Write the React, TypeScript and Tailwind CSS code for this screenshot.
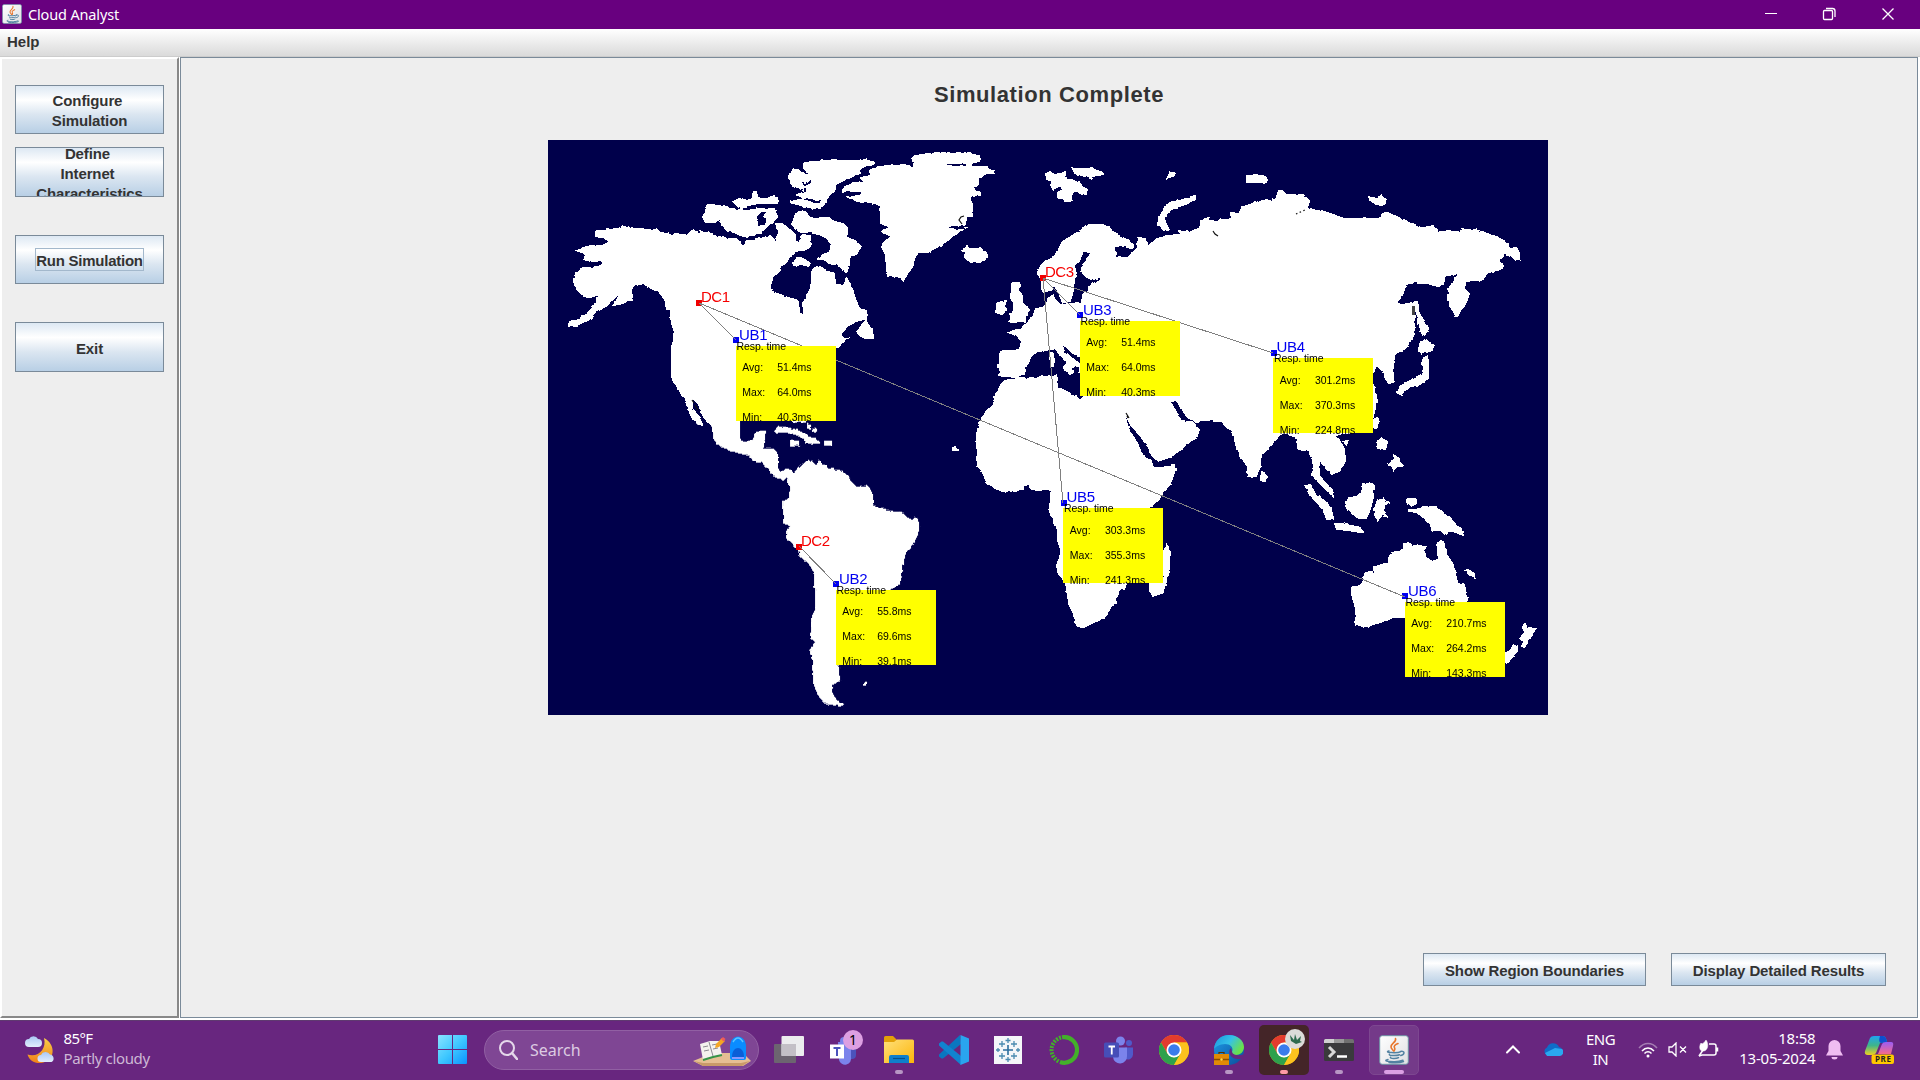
import React from "react";

const SEA = "#00004b";

/* Coastlines, each group traced on its own 3x grid */
const northAmerica = [
  "165,302 178,300 205,298 240,292 245,286 265,288 270,294 350,297 362,306 385,310 398,316 402,308 440,314 460,298 475,310 478,300 488,302 492,310 505,304 520,315 545,320 570,325 590,325 600,335 612,345 618,330 640,330 660,325 690,315 700,320 708,335 712,308 705,280 725,278 740,290 755,300 768,312 770,340 782,328 785,312 813,315 815,340 805,357 790,365 770,368 750,380 740,400 728,408 720,425 705,440 692,455 695,480 715,490 735,498 760,505 775,510 780,545 790,550 790,520 795,500 808,480 812,460 815,415 830,408 850,415 870,425 885,430 888,462 912,462 918,440 930,455 940,480 950,510 960,535 980,540 982,575 1000,605 1002,628 975,628 945,610 960,590 975,570 950,575 920,595 905,612 912,625 930,622 910,640 893,655 880,650 860,870 600,870 600,910 518,910 515,890 490,865 480,840 470,820 455,805 460,835 475,855 490,885 475,885 455,865 440,835 435,805 420,790 410,770 395,755 392,700 392,655 400,625 400,600 392,580 390,540 378,540 375,515 365,500 350,485 330,475 310,463 278,470 280,495 275,512 240,525 215,528 225,515 235,497 215,515 200,530 165,550 150,570 110,588 80,590 85,578 120,565 145,545 160,525 175,498 145,505 130,500 110,480 98,455 105,428 130,412 175,408 190,398 145,395 130,390 135,375 105,362 150,345 185,345 205,335 190,325 165,320",
  "765,250 785,240 800,248 810,262 870,262 885,275 912,280 925,295 925,320 945,330 965,350 950,375 930,380 930,405 920,432 905,415 885,405 865,400 855,392 828,388 845,375 870,360 872,340 860,325 835,315 815,310 790,308 765,300 755,280 760,265",
  "755,400 765,390 775,380 800,388 812,400 808,410 780,405 765,412",
  "785,100 800,95 880,88 920,90 975,88 1005,95 1003,105 975,110 960,120 965,130 940,140 920,150 905,155 890,165 885,185 860,205 855,225 840,238 810,235 790,230 750,220 750,210 790,207 765,195 790,185 775,175 752,165 745,135 760,115 775,118 795,130 805,135 790,115",
  "500,222 550,225 580,235 620,240 650,235 705,235 715,262 695,280 680,295 665,310 640,318 610,322 580,308 560,305 545,290 540,268 525,280 500,280 485,262 495,245",
  "575,215 595,205 635,208 635,190 650,183 655,205 680,205 700,195 715,200 715,222 690,222 655,222 625,228 605,238 590,230",
];
const northAmericaWater = [
  "650,262 665,245 678,245 670,260 680,270 675,285 655,287",
  "782,150 795,162 813,150 813,160 795,168 790,185 800,180",
  "790,207 845,210 838,216 800,214",
];
const northEurope = [
  "-115,178 -80,155 -55,155 -60,142 -30,135 -35,120 -10,110 20,105 75,103 100,108 95,85 105,75 150,70 160,66 220,68 250,66 300,76 303,90 280,98 275,108 320,108 330,118 346,122 345,132 320,132 297,145 297,165 283,178 303,185 303,197 275,200 280,235 275,260 262,265 255,290 270,290 240,305 215,325 180,350 145,368 115,370 105,385 100,410 82,435 70,458 60,443 22,440 18,415 15,375 3,350 10,335 30,320 10,310 5,300 25,293 0,280 0,250 -5,225 -35,218 -70,215 -105,200 -60,195 -55,185 -115,185",
  "243,362 260,343 268,355 300,352 325,370 325,385 300,400 270,398 250,382 255,370",
  "495,130 510,123 525,133 540,125 558,125 560,145 580,150 600,158 622,180 622,195 600,192 583,182 575,200 575,217 555,217 550,208 530,205 530,190 548,180 540,170 520,180 510,165 515,155 498,152",
  "573,112 610,115 640,115 673,127 670,137 640,140 630,147 605,138 582,130",
  "860,135 870,125 888,127 885,138 860,147",
  "950,195 952,210 925,222 885,235 860,250 855,265 862,285 870,300 850,302 830,285 835,265 850,235 870,215 905,208 930,198",
  "470,430 480,405 500,390 520,380 540,345 560,325 600,300 625,283 670,282 690,292 715,315 745,328 762,345 755,358 735,352 705,352 708,380 745,380 770,355 772,320 800,325 805,345 830,325 860,315 900,312 890,300 930,305 960,290 960,270 975,263 990,270 1030,275 1030,820 610,802 600,780 598,708 575,715 582,728 570,735 555,725 548,712 560,700 545,685 535,672 525,658 500,662 470,668 455,680 445,700 438,715 435,735 410,745 355,738 357,715 350,705 358,700 357,662 400,660 415,660 423,635 415,625 400,615 380,608 405,598 425,595 435,580 455,560 465,535 490,530 500,515 500,500 485,485 482,450",
  "393,460 420,455 423,470 415,480 425,495 430,520 450,540 440,555 438,575 400,577 380,577 390,568 388,550 400,540 400,525 390,505 392,480",
  "350,517 378,510 380,545 365,555 348,548",
  "507,668 520,665 525,690 522,712 510,712",
];
const northEuropeWater = [
  "612,368 630,370 620,390 605,405 603,425 615,440 635,452 660,444 660,450 640,458 625,470 625,485 608,488 605,515 545,522 572,515 580,490 585,450 590,430 588,405 600,395 605,380",
  "483,485 510,485 522,470 530,480 545,515 555,522 540,522 525,505 520,490 505,500 495,520",
  "548,648 560,655 575,670 600,682 600,700 580,685 555,665",
  "200,102 262,102 262,108 200,106",
  "200,290 255,288 255,298 215,295",
];
const siberia = [
  "0,270 25,262 30,275 45,285 60,265 70,268 90,265 90,250 115,250 125,230 180,212 200,207 215,212 232,200 235,180 250,182 258,192 310,192 330,212 325,235 380,245 430,263 540,265 545,250 560,245 600,262 640,280 665,292 700,285 715,305 750,300 780,305 785,297 830,298 890,318 925,338 930,355 945,350 962,365 960,390 945,392 935,380 915,372 898,390 915,412 905,420 862,430 850,452 800,455 795,475 810,490 800,520 780,550 768,563 755,540 740,510 745,475 760,450 775,430 760,437 735,437 733,465 710,470 680,462 640,460 618,465 610,495 593,517 605,523 640,515 645,560 645,612 620,655 590,675 582,695 580,725 583,755 570,762 555,750 550,725 530,710 520,730 520,760 532,800 525,850 515,870 80,870 0,860",
  "640,515 655,512 657,545 670,565 688,595 675,618 663,612 655,580 650,560",
  "660,630 675,628 690,640 708,645 690,665 665,672 653,665",
  "665,680 685,675 688,745 660,765 620,775 605,797 590,790 600,765 640,745 665,730",
  "138,140 160,132 190,135 207,150 195,162 175,158 138,160",
  "500,200 535,200 548,195 562,208 555,225 535,228 510,215",
];
const southAmerica = [
  "20,-10 40,30 40,55 50,72 85,92 115,100 150,108 160,125 180,128 205,145 210,160 250,182 262,172 265,195 270,205 265,235 248,245 250,310 272,322 258,330 258,355 290,385 300,410 325,430 340,455 345,520 345,570 335,590 330,655 345,665 328,690 335,720 340,790 350,820 370,850 420,860 432,853 410,840 395,815 400,795 420,780 415,740 440,600 570,510 600,492 605,470 612,430 615,405 640,375 655,340 658,310 650,290 630,298 605,278 570,272 520,255 518,215 500,195 470,200 450,180 445,165 420,150 385,145 355,120 350,135 325,120 300,135 280,160 275,150 260,145 240,158 235,140 235,100 220,85 190,85 198,32 165,35 158,60 140,65 122,62 120,30 120,-10",
  "0,-10 5,15 -12,12",
  "220,35 235,18 280,25 315,40 325,50 350,55 363,72 315,72 312,58 300,50 270,40 235,38",
  "270,62 298,62 298,76 270,76",
  "372,62 395,62 395,76 372,76",
  "322,12 332,15 332,30 322,26",
  "335,25 350,28 350,38 338,36",
  "275,0 318,0 316,10 300,6 278,10",
  "483,798 492,788 502,790 502,798",
];
const africa = [
  "190,60 230,55 300,50 330,45 352,45 355,80 385,95 420,118 432,108 440,85 1290,85 1290,215 1060,215 1020,225 985,270 965,285 962,320 950,350 925,350 920,320 900,290 885,255 880,225 865,205 840,187 800,182 770,190 740,172 720,145 710,125 693,125 705,145 725,180 760,185 780,210 770,235 740,255 720,275 690,293 655,305 635,290 625,265 600,230 570,195 557,170 568,205 600,260 605,280 635,300 640,318 690,318 705,310 707,330 695,370 670,400 655,425 630,443 560,672 555,690 540,690 530,725 510,750 495,775 460,790 430,805 410,800 400,765 385,735 380,700 375,670 365,655 350,640 350,625 357,590 362,570 350,540 350,510 340,490 325,450 330,420 332,393 315,390 300,395 270,388 265,375 255,378 250,390 225,393 190,397 160,385 140,370 122,330 107,318 107,220 125,170 160,130 165,100",
  "683,545 688,570 695,575 690,600 688,640 670,700 640,710 628,695 628,670 670,650 670,570",
  "35,272 35,265 48,257 56,264 56,272",
  "965,330 985,352 975,368 960,362",
];
const oceania = [
  "110,215 165,232 175,270 205,275 215,300 215,345 230,365 250,385 270,405 283,415 275,385 255,365 240,345 240,305 255,325 275,345 300,335 318,305 315,265 300,240 290,225 330,222 340,210",
  "305,245 328,238 320,258",
  "398,175 418,175 410,208 400,205",
  "408,245 425,232 445,245 437,270 415,268",
  "440,315 460,300 460,283 478,290 480,308 497,320 475,320 460,335 455,320",
  "192,375 215,372 225,395 255,420 275,445 283,480 262,480 240,440 210,410",
  "283,490 300,488 360,500 375,520 335,515 285,508",
  "315,430 325,412 350,408 365,390 370,370 385,365 405,375 403,395 395,440 380,478 350,475 325,450",
  "400,445 412,420 430,415 450,430 435,440 432,455 447,475 428,465 415,483 402,470",
  "495,425 500,415 530,415 533,430 515,440",
  "503,448 540,445 550,437 590,440 610,460 632,470 640,485 665,505 673,530 650,520 630,515 612,525 600,512 575,515 570,495 550,475 530,460 505,455",
  "333,680 365,672 375,635 390,632 398,640 400,620 430,610 442,610 445,590 460,575 490,570 490,550 505,547 520,555 565,558 550,575 570,600 590,600 592,545 612,542 620,580 640,610 655,670 675,672 685,725 680,760 500,772 460,775 420,790 370,803 345,798 345,745 335,715",
  "670,630 685,627 705,640 707,658 692,650",
  "848,790 858,790 862,805 890,805 870,835 855,865 842,860 850,845 833,835 850,820",
  "820,853 835,860 835,875 820,890 800,912 790,905 790,880 810,870",
];

function Land({ x, y, land, water = [] }: { x: number; y: number; land: string[]; water?: string[] }) {
  return (
    <g transform={`translate(${x} ${y}) scale(0.33333)`}>
      {land.map((p) => <polygon key={p} points={p} fill="#fff" />)}
      {water.map((p) => <polygon key={p} points={p} fill={SEA} />)}
    </g>
  );
}

const links = [
  [699, 303, 736, 340], [699, 303, 1405, 597], [799, 546, 836, 584],
  [1043, 278, 1080, 315], [1043, 278, 1273, 353], [1043, 278, 1063, 503],
];
const dataCenters = [
  { n: "DC1", x: 696, y: 300 }, { n: "DC2", x: 796, y: 544 }, { n: "DC3", x: 1040, y: 275 },
];
const userBases = [
  { n: "UB1", x: 736, y: 346, v: ["51.4ms", "64.0ms", "40.3ms"], d: 0 },
  { n: "UB2", x: 836, y: 590, v: ["55.8ms", "69.6ms", "39.1ms"], d: 0 },
  { n: "UB3", x: 1080, y: 321, v: ["51.4ms", "64.0ms", "40.3ms"], d: 0 },
  { n: "UB4", x: 1273, y: 358, v: ["301.2ms", "370.3ms", "224.8ms"], d: 1 },
  { n: "UB5", x: 1063, y: 508, v: ["303.3ms", "355.3ms", "241.3ms"], d: 1 },
  { n: "UB6", x: 1405, y: 602, v: ["210.7ms", "264.2ms", "143.3ms"], d: 0 },
];

function WorldMap() {
  return (
    <svg className="block h-[575px] w-[1000px] font-['Liberation_Sans',sans-serif]" viewBox="548 140 1000 575">
      <defs>
        <filter id="coast" x="0" y="0" width="100%" height="100%">
          <feTurbulence type="fractalNoise" baseFrequency="0.2" numOctaves="1" seed="4" result="n" />
          <feDisplacementMap in="SourceGraphic" in2="n" scale="3.5" xChannelSelector="R" yChannelSelector="G" />
        </filter>
      </defs>
      <rect x="548" y="140" width="1000" height="575" fill={SEA} />
      <g shapeRendering="crispEdges" filter="url(#coast)">
        <Land x={540} y={130} land={northAmerica} water={northAmericaWater} />
        <Land x={880} y={130} land={northEurope} water={northEuropeWater} />
        <Land x={1200} y={130} land={siberia} />
        <Land x={700} y={420} land={southAmerica} />
        <Land x={940} y={360} land={africa} />
        <Land x={1240} y={360} land={oceania} />
      </g>
      <g fill="none" stroke="#111" strokeWidth="1.2">
        <path d="M692 400l2 3M695 405l3 5M1213 231l2 3 3 2M1126 413l3 5M1127 416l1 2" />
        <path d="M1296 214l9-4" strokeDasharray="1.5 2.5" />
        <path d="M964 216l-3 1-2 3 3 4" />
        <path d="M1413.500 306v9" stroke="#444" strokeWidth="3" />
      </g>
      {dataCenters.map((d) => (
        <g key={d.n}>
          <rect x={d.x} y={d.y} width="6" height="6" fill="#f00000" />
          <text x={d.x + 5} y={d.y + 2} fill="#f60000" fontSize="15" textLength="29">{d.n}</text>
        </g>
      ))}
      {userBases.map((u) => (
        <g key={u.n}>
          <rect x={u.x - 3 + u.d} y={u.y - 9 + u.d} width="6" height="6" fill="#0000f0" />
        </g>
      ))}
      <g stroke="#808080" strokeWidth="1" shapeRendering="crispEdges">
        {links.map((l) => <line key={l.join()} x1={l[0]} y1={l[1]} x2={l[2]} y2={l[3]} />)}
      </g>
      {userBases.map((u) => (
        <g key={u.n}>
          <rect x={u.x} y={u.y} width="100" height="75" fill="#ff0" />
          <text x={u.x + 3 + u.d * 0.5} y={u.y - 6} fill="#0000f0" fontSize="15" textLength="28.5">{u.n}</text>
          <g fontSize="10.5" fill="#000">
            <text x={u.x + 0.5 + u.d * 0.5} y={u.y + 4} textLength="49.5">Resp. time</text>
            {["Avg:", "Max:", "Min:"].map((k, i) => (
              <g key={k}>
                <text x={u.x + 6.3 + u.d * 0.5} y={u.y + 25 * (i + 1) + u.d}>{k}</text>
                <text x={u.x + 41.2 + u.d * 0.7} y={u.y + 25 * (i + 1) + u.d}>{u.v[i]}</text>
              </g>
            ))}
          </g>
        </g>
      ))}
    </svg>
  );
}

function SwingButton({ className, children }: { className: string; children: React.ReactNode }) {
  return (
    <button
      className={`flex shrink-0 items-center justify-center overflow-hidden border border-[#7a8a99] bg-[linear-gradient(#dde8f3_0%,#ffffff_30%,#dbe6f1_60%,#b8cfe5_100%)] text-center text-[15px] leading-5 font-bold tracking-[-0.12px] text-[#333] ${className}`}
    >
      {children}
    </button>
  );
}

function JavaLogo({ size }: { size: number }) {
  return (
    <svg width={size} height={size} viewBox="0 0 30 30">
      <defs>
        <linearGradient id="jbg" x2="1" y2="1"><stop stopColor="#fff" /><stop offset="1" stopColor="#dfe0e2" /></linearGradient>
      </defs>
      <rect x=".7" y=".7" width="28.6" height="28.6" rx="2.5" fill="url(#jbg)" stroke="#6d93a5" strokeWidth="1" />
      <g fill="none" stroke="#e8762c" strokeWidth="1.6" strokeLinecap="round">
        <path d="M16.500 3.500c1.500 3.500-5 5-4.500 8.500.2 1.800 1.800 2.600 2.500 4" />
        <path d="M19 8.500c-3 1.200-4.500 2.700-3.500 4.300.8 1.200.5 2.200-.2 3" />
      </g>
      <g fill="none" stroke="#5382a1" strokeWidth="1.5" strokeLinecap="round">
        <path d="M10 16c-6 1.500 8 2.600 12 .6M10.500 19.400c-1.500 1.300 7 1.700 10 .3M11.500 22.400c-1 1.300 6 1.500 8 .2M9 24.400c-8 2 9 3.600 15 .9M21.500 16.500c5-1 4.200 3.200.3 4M10 27.500c6 .6 12 .2 14.500-1" />
      </g>
    </svg>
  );
}

function ChromeLogo() {
  return (
    <svg width="30" height="30" viewBox="0 0 30 30">
      <circle cx="15" cy="15" r="15" fill="#fbbc04" />
      <path d="M2 7.500A15 15 0 0 1 28 7.500H15L8.500 18.750Z" fill="#e33b2e" />
      <path d="M2 7.500L8.500 18.750 15 22.500 21.500 18.750 15 30A15 15 0 0 1 2 7.500Z" fill="#2da14c" />
      <path d="M15 7.500H28A15 15 0 0 1 15 30L21.500 18.750Z" fill="#fcc31e" />
      <circle cx="15" cy="15" r="7.500" fill="#fff" />
      <circle cx="15" cy="15" r="5.800" fill="#3a7cec" />
    </svg>
  );
}

function TeamsLogo({ chat = false }: { chat?: boolean }) {
  return chat ? (
    <svg width="36" height="36" viewBox="0 0 36 36">
      <rect x="20" y="11" width="10" height="17" rx="4" fill="#4b53bc" />
      <path d="M12 11h13v15a6 6 0 0 1-12 3z" fill="#7b83eb" />
      <circle cx="18" cy="10" r="4" fill="#7b83eb" />
      <rect x="4" y="13.500" width="14" height="14" fill="#fff" />
      <path d="M7.500 17h7M11 17v8" stroke="#4b53bc" strokeWidth="2" />
    </svg>
  ) : (
    <svg width="30" height="28" viewBox="0 0 30 28">
      <circle cx="25" cy="7" r="3" fill="#5059c9" />
      <circle cx="16.500" cy="5" r="4.500" fill="#7b83eb" />
      <path d="M21 11.500h8v7a5 5 0 0 1-8 4z" fill="#5059c9" />
      <path d="M9 11.500h14V20a7 7 0 0 1-14 1z" fill="#7b83eb" />
      <rect x="0" y="6.500" width="15" height="15" rx="1.500" fill="#464eb8" />
      <path d="M4.500 10.500h6.500M7.750 10.500v8" stroke="#fff" strokeWidth="1.800" />
    </svg>
  );
}

function EdgeLogo() {
  return (
    <svg width="30" height="30" viewBox="0 0 30 30">
      <defs>
        <linearGradient id="eg" x2="1" y2=".5"><stop stopColor="#1a93e0" /><stop offset=".55" stopColor="#35c1e8" /><stop offset="1" stopColor="#6be04a" /></linearGradient>
        <linearGradient id="eb" x2="1" y2="1"><stop stopColor="#1f9de8" /><stop offset="1" stopColor="#0a4c9a" /></linearGradient>
      </defs>
      <circle cx="15" cy="15" r="15" fill="url(#eb)" />
      <path d="M0 14C1 5 7 0 15 0c9 0 15 6 15 12 0 5-4 8-8 8-3 0-5-1-4-3 2-5-2-8-7-8S1 12 0 14z" fill="url(#eg)" />
      <path d="M17 13c-4 4-1 11 7 11 2 0 4-.5 5-1l1-4c-3 2-11 2-12-2z" fill="#68267f" />
      <rect x="0" y="19" width="15" height="11" fill="#e08a06" />
      <path d="M0 24.500h15" stroke="#8a4d00" strokeWidth="1.500" />
      <path d="M5 19v-1.500h5V19" fill="none" stroke="#5a3200" strokeWidth="1.200" />
      <circle cx="7.500" cy="24.500" r="1.200" fill="#ffd94a" />
    </svg>
  );
}

function Slot({ children, dot = "", tile = "" }: { children: React.ReactNode; dot?: string; tile?: string }) {
  return (
    <div className="relative flex h-[60px] w-[55px] shrink-0 items-center justify-center">
      {tile && <div className={`absolute top-[5px] left-[2.5px] h-[50px] w-[50px] rounded-[5px] ${tile}`} />}
      <div className="relative">{children}</div>
      {dot && <div className={`absolute bottom-[6px] left-1/2 h-1 -translate-x-1/2 rounded-full ${dot}`} />}
    </div>
  );
}

function Taskbar() {
  return (
    <footer className="flex h-[60px] w-[1920px] shrink-0 items-center bg-[#68267f] pb-px font-['Noto_Sans',sans-serif] text-white shadow-[inset_0_1px_0_#5f3a70]">
      <div className="flex w-[424.5px] shrink-0 items-center pl-6">
        <svg width="32" height="30" viewBox="0 0 32 30">
          <defs>
            <linearGradient id="moon" x2="0" y2="1"><stop stopColor="#f8d048" /><stop offset="1" stopColor="#f08018" /></linearGradient>
            <linearGradient id="cl" x2="0" y2="1"><stop stopColor="#a9c8f4" /><stop offset="1" stopColor="#e2eefc" /></linearGradient>
          </defs>
          <path d="M20 3C32 9 32 26 17 28 10 28.500 5 25 3.500 19.500 14 23 23 14 20 3z" fill="url(#moon)" />
          <path d="M5 12a4 4 0 0 1 0-8 5 5 0 0 1 9 0 4 4 0 0 1 0 8z" fill="url(#cl)" />
          <path d="M17 27a3.500 3.500 0 0 1 0-7 5 5 0 0 1 9-.5 4 4 0 0 1 1.500 7.500z" fill="url(#cl)" />
        </svg>
        <div className="mb-[3px] ml-[7.5px] text-[15px] leading-5">
          <div className="tracking-[-0.6px]">85°F</div>
          <div className="tracking-[-0.35px] text-[#cdb8d5]">Partly cloudy</div>
        </div>
      </div>
      <Slot>
        <svg width="29" height="29" viewBox="0 0 29 29">
          <defs><linearGradient id="win" gradientUnits="userSpaceOnUse" x2="29" y2="29"><stop stopColor="#8ae3ff" /><stop offset=".5" stopColor="#3fc8ff" /><stop offset="1" stopColor="#0a93ff" /></linearGradient></defs>
          <path d="M0 1a1 1 0 0 1 1-1h13v14H0zM15 0h13a1 1 0 0 1 1 1v13H15zM0 15h14v14H1a1 1 0 0 1-1-1zM15 15h14v13a1 1 0 0 1-1 1H15z" fill="url(#win)" />
        </svg>
      </Slot>
      <div className="mr-[2.500px] ml-[4.500px] flex h-10 w-[275px] shrink-0 items-center rounded-full border border-[#9160a3] bg-[#7f4694] pl-[14px]">
        <svg width="19" height="20" viewBox="0 0 19 20" fill="none" stroke="#e5d8ea" strokeWidth="2">
          <circle cx="8" cy="8" r="7" /><path d="M13 13l5 6" strokeWidth="2.500" strokeLinecap="round" />
        </svg>
        <span className="ml-[12px] text-[16px] text-[#dccbe2]">Search</span>
        <svg className="ml-auto mr-[7px]" width="58" height="34" viewBox="0 0 58 34">
          <path d="M0 28L20 20h30l8 8-8 5H10z" fill="#e6bf93" />
          <path d="M1 28l9 2h38l9-2-8 5H10z" fill="#c99a69" />
          <path d="M7 11l10-3 9 0 3 14-9 2-10 3z" fill="#f5f2ee" />
          <path d="M10 27l10-3 9-2" fill="none" stroke="#379448" strokeWidth="2" />
          <path d="M16 9l4 14M10 14l5-1M11 18l5-1M19 12l5-1M20 16l5-1" stroke="#8d8a90" strokeWidth="1" />
          <path d="M22 15l1-4 6-6 3 3-6 6z" fill="#f5a623" /><path d="M28 6l2-2 2.500 2-2 2.500z" fill="#ef5a5a" />
          <path d="M37 14c0-14 16-14 16 0v11q0 2-2 2H39q-2 0-2-2z" fill="#0a8cff" />
          <path d="M40 9q5-8 10 0" fill="none" stroke="#5cc4ff" strokeWidth="1.500" />
          <path d="M39 24c0-12 12-12 12 0z" fill="#0a5ed8" /><path d="M39 25h12" stroke="#b39cff" strokeWidth="1.500" />
        </svg>
      </div>
      <Slot>
        <svg width="30" height="27" viewBox="0 0 30 27">
          <rect x="0" y="8" width="22" height="19" rx="1" fill="#6c6470" />
          <rect x="7.500" y="0" width="22.500" height="20" rx="1" fill="#ececee" />
          <path d="M7.500 8H22v12H7.500z" fill="#c3bfc6" />
        </svg>
      </Slot>
      <Slot>
        <div className="relative -top-px">
          <TeamsLogo chat />
          <div className="absolute -top-[1px] left-[17px] flex h-5 w-5 items-center justify-center rounded-full bg-[#dd9fe2] text-[14px] text-black">1</div>
        </div>
      </Slot>
      <Slot dot="w-2 bg-[#b795c4]">
        <svg width="30" height="27" viewBox="0 0 30 27">
          <defs><linearGradient id="fo" x2="1" y2="1"><stop stopColor="#ffe07a" /><stop offset="1" stopColor="#fcb50a" /></linearGradient></defs>
          <path d="M0 1.500A1.500 1.500 0 0 1 1.500 0H9l4 4h16v8H0z" fill="#e3a008" />
          <path d="M0 6l10 0 3-2.500h15.500A1.500 1.500 0 0 1 30 5v22H0z" fill="url(#fo)" />
          <path d="M5 27v-6a2 2 0 0 1 2-2h16a2 2 0 0 1 2 2v6z" fill="#0f7fcb" /><path d="M9 22.500h12" stroke="#07508a" strokeWidth="1.200" />
        </svg>
      </Slot>
      <Slot>
        <svg width="30" height="30" viewBox="0 0 30 30">
          <path d="M21 0L0 19.500v2l2.500 2h1.500L22 9z" fill="#0a76c0" />
          <path d="M22 30L0 10.500v-2l2.500-2H4L22 21z" fill="#1183d0" />
          <path d="M21.500 0L30 3.500v23L21.500 30z" fill="#2aa4ee" />
        </svg>
      </Slot>
      <Slot>
        <svg className="relative -left-px" width="28" height="28" viewBox="0 0 28 28">
          <rect width="28" height="28" fill="#f5f6f9" />
          <path d="M14 9v10M9 14h10" stroke="#2d6e9e" strokeWidth="1.600" />
          <path d="M8 5v6M5 8h6M20 5v6M17 8h6M8 17v6M5 20h6M20 17v6M17 20h6M14 2v5M11.500 4.500h5M14 21v5M11.500 23.500h5M4 12v4M2 14h4M24 12v4M22 14h4" stroke="#4b8ab0" strokeWidth="1.300" />
        </svg>
      </Slot>
      <Slot>
        <svg width="30" height="30" viewBox="0 0 30 30" fill="none" stroke="#43b02a">
          <path d="M11 27A12.800 12.800 0 1 0 13 2.300" strokeWidth="4.200" />
          <path d="M12 2.500A12.800 12.800 0 0 0 10 26.500" strokeWidth="4" strokeDasharray="2 1.200" />
        </svg>
      </Slot>
      <Slot><TeamsLogo /></Slot>
      <Slot><ChromeLogo /></Slot>
      <Slot dot="w-2 bg-[#b795c4]"><EdgeLogo /></Slot>
      <Slot dot="w-2 bg-[#ff9aa5]" tile="bg-[#442528]">
        <ChromeLogo />
        <svg className="absolute -top-[6px] left-[16px]" width="20" height="20" viewBox="0 0 20 20">
          <circle cx="10" cy="10" r="10" fill="#dcdcd8" />
          <path d="M5 6l4 5 1-6 2 6 4-4-1 5 2 1-6 2-5-3z" fill="#2e6b4d" />
        </svg>
      </Slot>
      <Slot dot="w-2 bg-[#b795c4]">
        <svg width="30" height="22" viewBox="0 0 30 22">
          <rect width="30" height="22" rx="1.500" fill="#3a3a3c" />
          <path d="M0 4V1.500A1.500 1.500 0 0 1 1.500 0H10v4z" fill="#d0d0d0" /><path d="M10 0h10v4H10z" fill="#999" /><path d="M20 0h8.500A1.500 1.500 0 0 1 30 1.500V4H20z" fill="#707070" />
          <path d="M5 8l5 5-5 5" fill="none" stroke="#d8d8d8" strokeWidth="3" /><path d="M13 17.500h10" stroke="#fff" strokeWidth="2.500" />
        </svg>
      </Slot>
      <Slot dot="w-5 bg-[#dba0e4]" tile="border border-[#7d4790] bg-[#743a89]"><JavaLogo size={30} /></Slot>

      <div className="ml-[83px] flex h-full items-center">
        <svg width="16" height="9" viewBox="0 0 16 9" fill="none" stroke="#fff" strokeWidth="2" strokeLinecap="round"><path d="M2 7.500l6-6 6 6" /></svg>
        <svg className="ml-[22px]" width="20" height="13" viewBox="0 0 20 13">
          <path d="M4 12a4 4 0 0 1 0-7.500A6.500 6.500 0 0 1 16 4a4.500 4.500 0 0 1 2 8z" fill="#0f6cc8" />
          <path d="M2 10L12 5l7 1a4 4 0 0 1-3 7H4z" fill="#2aa8f0" />
        </svg>
        <div className="mb-[2px] ml-[19px] w-[38px] text-center text-[15px] leading-5 tracking-[-0.5px]">ENG<br />IN</div>
        <svg className="ml-[18px]" width="20" height="16" viewBox="0 0 20 16" fill="none" stroke="#fff" strokeWidth="1.500">
          <path d="M1 6c5-6 13-6 18 0" opacity=".4" /><path d="M4 9c3.500-4 8.500-4 12 0" /><path d="M6.500 11.500c2-2.200 5-2.200 7 0" /><circle cx="10" cy="14" r="1.500" fill="#fff" stroke="none" />
        </svg>
        <svg className="ml-[10px]" width="19" height="15" viewBox="0 0 19 15" fill="none" stroke="#fff" strokeWidth="1.300">
          <path d="M1 5h3l4-4v13l-4-4H1zM12 4.500l6 6M18 4.500l-6 6" />
        </svg>
        <svg className="ml-[11px] -mt-1" width="21" height="18" viewBox="0 0 21 18" fill="none" stroke="#fff" strokeWidth="1.500">
          <path d="M11 5h5a2 2 0 0 1 2 2v7a2 2 0 0 1-2 2H4l-3 1M19.500 8.500v4" /><path d="M8 1c3 4 2 10-2 11-5 1-5-5-3-8 1 2 3 0 5-3z" fill="#fff" strokeWidth=".5" /><path d="M1 17l4-6" />
        </svg>
        <div className="mb-[3px] ml-[17px] w-[80px] text-right text-[15px] leading-5 whitespace-nowrap tracking-[-0.2px]">18:58<br />13-05-2024</div>
        <svg className="ml-[10px]" width="17" height="20" viewBox="0 0 17 20" fill="#efbdf2">
          <path d="M8.500 0a6 6 0 0 1 6 6v5l2.500 4.500H0L2.500 11V6a6 6 0 0 1 6-6z" /><path d="M5.500 17h6a3 2.500 0 0 1-6 0z" />
        </svg>
        <svg className="ml-[21px]" width="31" height="30" viewBox="0 0 31 30">
          <defs>
            <linearGradient id="c1" x2="0" y2="1"><stop stopColor="#1ea4f0" /><stop offset=".5" stopColor="#3fb58a" /><stop offset="1" stopColor="#f0d020" /></linearGradient>
            <linearGradient id="c2" x2="0" y2="1"><stop stopColor="#9a5cf5" /><stop offset="1" stopColor="#f56a8a" /></linearGradient>
          </defs>
          <path d="M6 3Q7 1 10 1h9q3 0 4 6l-7 1-4 10q-1 2-4 2H4q-4 0-3-4z" fill="url(#c1)" />
          <path d="M16 1h3q3 0 4 6l-6 1q-3-1-1-7z" fill="#0c4fd0" />
          <path d="M18 9q1-2 4-2h5q3 0 2 4l-2 8H14z" fill="url(#c2)" />
          <rect x="7.500" y="19.500" width="22.500" height="9.500" rx="2" fill="#ffc800" />
          <text x="19" y="27.200" textAnchor="middle" fontSize="8" fontWeight="700" fill="#222" textLength="16">PRE</text>
        </svg>
      </div>
    </footer>
  );
}

export default function App() {
  return (
    <div className="flex h-[1080px] w-[1920px] flex-col overflow-hidden bg-[#eee] font-['Liberation_Sans',sans-serif]">
      <header className="flex h-[29px] shrink-0 items-center bg-[#68007f] pb-px pl-[2px] text-white">
        <JavaLogo size={20} />
        <span className="mt-px ml-[6px] font-['Noto_Sans',sans-serif] text-[14.500px] tracking-[-0.15px]">Cloud Analyst</span>
        <svg className="mt-px ml-auto" width="155" height="29" viewBox="0 0 155 29" fill="none" stroke="#fff" strokeWidth="1">
          <path d="M0 13.500h12" />
          <rect x="58.500" y="10.500" width="9" height="9" rx="1" strokeWidth="1.300" /><path d="M61 8.500h6.500a2.500 2.500 0 0 1 2.500 2.500v6" strokeWidth="1.300" />
          <path d="M117.500 8.500l11 11M128.500 8.500l-11 11" strokeWidth="1.300" />
        </svg>
      </header>
      <nav className="flex h-[28px] shrink-0 items-center border-b border-[#ccc] bg-gradient-to-b from-white to-[#dadada] pb-px pl-[7px] text-[15px] font-bold text-[#333]">Help</nav>
      <main className="flex h-[963px] shrink-0 bg-white pb-[2px]">
        <aside className="flex w-[179px] shrink-0 flex-col border-t-2 border-r-2 border-b-2 border-l-2 border-t-white border-r-[#888] border-b-[#888] border-l-white bg-[#eee] pt-[26px] pl-[13px]">
          <SwingButton className="h-[49px] w-[149px] pt-[2px]"><span>Configure&nbsp;<br />Simulation</span></SwingButton>
          <SwingButton className="mt-[13px] h-[50px] w-[149px] pt-[4px]"><span>Define&nbsp;<br />Internet&nbsp;<br />Characteristics</span></SwingButton>
          <SwingButton className="mt-[38px] h-[49px] w-[149px]"><span className="border border-[#a3b8cc] pt-[2px] leading-[19px] tracking-[-0.25px]">Run Simulation</span></SwingButton>
          <SwingButton className="mt-[38px] h-[50px] w-[149px] pt-[3px]">Exit</SwingButton>
        </aside>
        <section className="ml-px mr-[2px] flex flex-1 flex-col items-center border border-[#7a8a99] bg-[#eee]">
          <h1 className="mt-[22px] h-[30px] text-[22px] leading-[30px] font-bold tracking-[0.6px] text-[#333]">Simulation Complete</h1>
          <div className="mt-[30px] mr-[2px]"><WorldMap /></div>
          <div className="mt-auto mr-[31px] mb-[31px] flex gap-[25px] self-end">
            <SwingButton className="h-[33px] w-[223px] pt-[2px]">Show Region Boundaries</SwingButton>
            <SwingButton className="h-[33px] w-[215px] pt-[2px]">Display Detailed Results</SwingButton>
          </div>
        </section>
      </main>
      <Taskbar />
    </div>
  );
}
